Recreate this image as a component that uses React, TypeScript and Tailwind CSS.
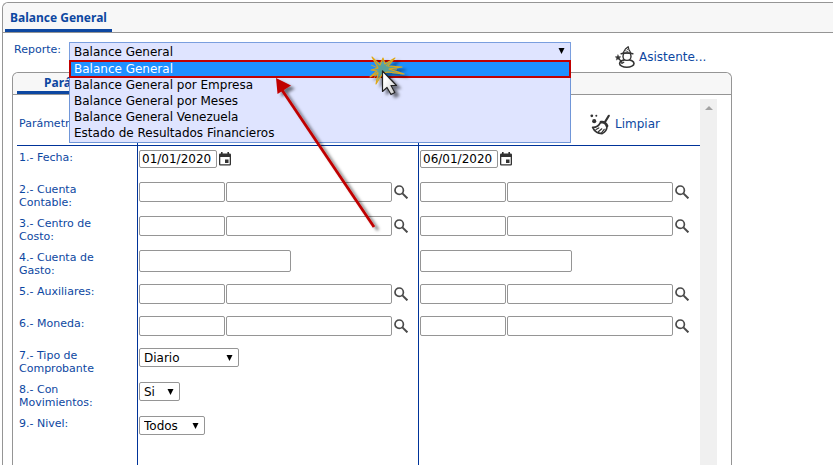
import { useState, type ReactNode } from 'react';
import clsx from 'clsx';

const reports = [
  'Balance General',
  'Balance General por Empresa',
  'Balance General por Meses',
  'Balance General Venezuela',
  'Estado de Resultados Financieros',
];

const fieldClass = 'rounded-xs border border-[#959595] bg-white text-xs text-black';

function CaretIcon() {
  return (
    <svg
      viewBox="0 0 7 7"
      className="pointer-events-none absolute top-1/2 right-1.5 size-[7px] -translate-y-1/2"
      aria-hidden="true"
    >
      <path d="M0.5 0.5h6L3.5 6.5z" fill="#000" />
    </svg>
  );
}

function SearchIcon() {
  return (
    <svg viewBox="0 0 14 14" className="size-3.5" fill="none" stroke="#4a4a4a" aria-hidden="true">
      <circle cx="5.2" cy="5.2" r="4.2" strokeWidth="1.7" />
      <path d="M8.4 8.4l5 5" strokeWidth="2" />
    </svg>
  );
}

function CalendarIcon() {
  return (
    <svg viewBox="0 0 12 14" className="h-3.5 w-3" aria-hidden="true">
      <path
        fill="#333"
        fillRule="evenodd"
        d="M2 0h1.6v1.5h4.8V0H10v1.5h.8Q12 1.5 12 2.7v9.6q0 1.2-1.2 1.2H1.2Q0 13.5 0 12.3V2.7Q0 1.5 1.2 1.5H2zM1.3 5v7.2h9.4V5zM6 7.5h3.5V11H6z"
      />
    </svg>
  );
}

function WizardIcon() {
  return (
    <svg
      viewBox="0 0 20 22"
      className="h-[22px] w-5"
      fill="none"
      stroke="#333"
      strokeWidth="1.4"
      strokeLinejoin="round"
      strokeLinecap="round"
      aria-hidden="true"
    >
      <ellipse cx="11.8" cy="17.4" rx="7.2" ry="3.8" strokeWidth="1.6" />
      <circle cx="12" cy="10.4" r="4" fill="#fff" />
      <path d="M8 7L10.400 3l2.800-2.300.6 2.500L15.800 7z" fill="#fff" strokeWidth="1.200" />
      <path d="M10.500 4.800l2.500.8M11.800 2.800l1.200 1" strokeWidth=".8" />
      <path d="M6.200 7.800c3.400-1.100 8-1.100 11.600 0" strokeWidth="1.500" />
      <path d="M4.200 12.800l2.600 3.600M8.800 16.200l-2 1.200" strokeWidth="1.200" />
      <path
        d="M3 8.800l.8 1.800 2 .2-1.500 1.300.4 2L3 13.100l-1.700 1 .4-2L.2 10.800l2-.2z"
        fill="#333"
        strokeWidth=".4"
      />
    </svg>
  );
}

function BroomIcon() {
  return (
    <svg
      viewBox="0 0 21 21"
      className="size-[21px]"
      fill="none"
      stroke="#333"
      strokeWidth="1.6"
      strokeLinejoin="round"
      strokeLinecap="round"
      aria-hidden="true"
    >
      <path d="M18.800 1.800l-4.100 6.700" strokeWidth="2.2" />
      <path d="M11 8.200c2.600-.5 5.200 1.100 6 3.800" strokeWidth="2.800" />
      <path d="M10.200 9C8.400 12.300 6 13.600 2.600 13.400c1.600 3.700 5.200 6 9.600 6.200 3.200-1.600 4.800-4.300 4.800-7.600" />
      <path d="M6 15.500l2.800-1.600M8.600 17.500l3.200-2.700M11.600 18.900l2.600-3.600" strokeWidth="1.2" />
      <circle cx="1.8" cy="1.8" r="1.4" fill="#333" stroke="none" />
      <circle cx="6.300" cy="1.8" r="1" fill="#333" stroke="none" />
      <circle cx="4.2" cy="7.200" r="2.1" fill="#333" stroke="none" />
    </svg>
  );
}

// arrow and click pointer drawn over the open list
function ClickHint() {
  return (
    <svg
      viewBox="0 0 360 180"
      className="pointer-events-none absolute top-0 left-0 h-[180px] w-[360px] overflow-visible"
      aria-hidden="true"
    >
      <defs>
        <filter id="shadow" x="-20%" y="-20%" width="150%" height="150%">
          <feDropShadow dx="4" dy="3" stdDeviation="1.8" floodColor="#000" floodOpacity=".5" />
        </filter>
        <linearGradient id="pointer" x1="0" y1="0" x2="1" y2="1">
          <stop offset=".3" stopColor="#fff" />
          <stop offset="1" stopColor="#c8c8c8" />
        </linearGradient>
      </defs>
      <g filter="url(#shadow)">
        <path d="M213 30L305 167" stroke="#c00000" strokeWidth="2.8" />
        <path d="M207 18l1.500 16L222 25.500z" fill="#c00000" />
      </g>
      <g filter="url(#shadow)">
        <path
          d="M303-3L311 5L314-2L316 4L326-2L319 6L333 7L320 9L335 14L319 12L314 13L307 24L309 13L301 17L308 11L302 10L309 8z"
          fill="#6fae8c"
          fillOpacity=".7"
          stroke="#e0a818"
          strokeWidth="1.1"
          strokeLinejoin="round"
        />
        <path d="M302 5l7 3M323 1l-6 5M320 9h8M305 18l4-6" stroke="#e0a818" strokeWidth=".8" />
        <path
          d="M313.500 11v20.500l4.500-4 4 7 3.800-2-3.800-7h5.500z"
          fill="url(#pointer)"
          stroke="#222"
          strokeWidth="1.2"
          strokeLinejoin="round"
        />
      </g>
    </svg>
  );
}

type SelectProps = {
  id: string;
  options: string[];
  className: string;
};

function SelectField(props: SelectProps) {
  return (
    <div className={clsx('relative', props.className)}>
      <select id={props.id} className={clsx(fieldClass, 'block h-[19px] w-full appearance-none pl-1')}>
        {props.options.map((option) => (
          <option key={option}>{option}</option>
        ))}
      </select>
      <CaretIcon />
    </div>
  );
}

function DateField({ id, label, initial }: { id: string; label: string; initial: string }) {
  const [value, setValue] = useState(initial);

  return (
    <div className="flex items-center gap-0.5">
      <input
        id={id}
        type="text"
        aria-label={label}
        value={value}
        onChange={(e) => setValue(e.target.value)}
        className={clsx(fieldClass, 'h-[18px] w-[78px] px-0.5')}
      />
      <button type="button" aria-label="Abrir calendario">
        <CalendarIcon />
      </button>
    </div>
  );
}

function LookupField({ id, label }: { id: string; label: string }) {
  return (
    <div className="flex items-center gap-px">
      <input id={id} aria-label={label} type="text" className={clsx(fieldClass, 'h-5 w-[86px] px-0.5')} />
      <input aria-label={`${label} descripción`} type="text" className={clsx(fieldClass, 'h-5 w-[166px] px-0.5')} />
      <button type="button" aria-label="Buscar" className="ml-px">
        <SearchIcon />
      </button>
    </div>
  );
}

function TextField({ id, label }: { id: string; label: string }) {
  return <input id={id} aria-label={label} type="text" className={clsx(fieldClass, 'block h-[22px] w-[152px] px-0.5')} />;
}

type RowProps = {
  id: string;
  label: string;
  from: ReactNode;
  to?: ReactNode;
  tall?: boolean;
};

function ParamRow({ id, label, from, to, tall }: RowProps) {
  return (
    <tr className={clsx('align-top', tall ? 'h-[34px]' : 'h-8')}>
      <th scope="row" className="border-r border-[#003399] pt-[5px] pr-4 pl-0.5 text-left font-normal">
        <label htmlFor={id} className="block text-[11px] leading-[13px]">
          {label}
        </label>
      </th>
      <td className="border-r border-[#003399] pt-1 pl-px">{from}</td>
      <td className="pt-1 pl-px">{to}</td>
    </tr>
  );
}

function ReportPicker() {
  const [report, setReport] = useState(reports[0]);

  return (
    <div className="relative w-[502px]">
      <select
        id="reporte"
        value={report}
        onChange={(e) => setReport(e.target.value)}
        className="block h-[18px] w-full appearance-none border border-b-0 border-[#7a9ede] bg-[#dfe4ff] pl-1 text-xs text-black"
      >
        {reports.map((name) => (
          <option key={name}>{name}</option>
        ))}
      </select>
      <CaretIcon />
      <ul
        role="listbox"
        aria-label="Reporte"
        className="absolute top-full left-0 z-10 w-full border border-[#7096d8] bg-[#dfe4ff] pb-px text-xs leading-4 text-black"
      >
        {reports.map((name) => (
          <li
            key={name}
            role="option"
            aria-selected={name === report}
            onClick={() => setReport(name)}
            className={clsx(
              'cursor-default pl-1',
              name === report && 'bg-[#1e90ff] text-white outline-2 -outline-offset-1 outline-[#c00000]'
            )}
          >
            {name}
          </li>
        ))}
      </ul>
      <div className="absolute top-full left-0 z-20">
        <ClickHint />
      </div>
    </div>
  );
}

export default function App() {
  return (
    <div className="flex min-h-screen flex-col bg-white pt-0.5 pl-0.5 font-['DejaVu_Sans',Verdana,sans-serif] text-xs text-[#0d47a1]">
      <main className="flex flex-1 flex-col rounded-tl-md border-t border-l border-[#959595]">
        <div className="flex h-[30px] rounded-tl-md border-b border-[#959595] bg-[#f7f7f7] pl-0.5">
          <button
            type="button"
            className="border-b-3 border-[#0d47a1] px-[5px] pt-1 font-['Noto_Sans',Verdana,sans-serif] font-bold"
          >
            Balance General
          </button>
        </div>

        <div className="flex h-[39px] items-start pt-[9px] pl-[11px]">
          <label htmlFor="reporte" className="w-[55px] text-[11px] leading-4">
            Reporte:
          </label>
          <ReportPicker />
          <button type="button" className="mt-1 ml-11 flex items-center gap-1">
            <WizardIcon />
            Asistente...
          </button>
        </div>

        <section className="mr-[101px] ml-[9px] flex flex-1 flex-col rounded-t-md border border-b-0 border-[#959595]">
          <div className="flex h-[22px] rounded-t-md border-b border-[#959595] bg-[#f7f7f7] pl-1">
            <button
              type="button"
              className="border-b-3 border-[#0d47a1] px-[27px] pt-0.5 font-['Noto_Sans',Verdana,sans-serif] leading-4 font-bold"
            >
              Parámetros
            </button>
          </div>

          <div className="flex flex-1 pt-1 pr-3.5 pl-1">
            <div className="flex flex-1 flex-col">
              <table className="w-full table-fixed border-separate border-spacing-0">
                <colgroup>
                  <col className="w-[121px]" />
                  <col />
                  <col />
                </colgroup>
                <thead>
                  <tr className="h-[47px]">
                    <th
                      scope="col"
                      className="border-r border-b border-[#003399] pt-1 pl-0.5 text-left text-[11px] font-normal"
                    >
                      Parámetros
                    </th>
                    <td className="border-r border-b border-[#003399]" />
                    <td className="border-b border-[#003399] pt-1 pr-10">
                      <button type="button" className="ml-auto flex items-center gap-1">
                        <BroomIcon />
                        Limpiar
                      </button>
                    </td>
                  </tr>
                </thead>
                <tbody>
                  <ParamRow
                    id="fecha"
                    label="1.- Fecha:"
                    from={<DateField id="fecha" label="Fecha desde" initial="01/01/2020" />}
                    to={<DateField id="fecha-hasta" label="Fecha hasta" initial="06/01/2020" />}
                  />
                  <ParamRow
                    id="cuenta"
                    label="2.- Cuenta Contable:"
                    tall
                    from={<LookupField id="cuenta" label="Cuenta contable desde" />}
                    to={<LookupField id="cuenta-hasta" label="Cuenta contable hasta" />}
                  />
                  <ParamRow
                    id="centro"
                    label="3.- Centro de Costo:"
                    tall
                    from={<LookupField id="centro" label="Centro de costo desde" />}
                    to={<LookupField id="centro-hasta" label="Centro de costo hasta" />}
                  />
                  <ParamRow
                    id="gasto"
                    label="4.- Cuenta de Gasto:"
                    tall
                    from={<TextField id="gasto" label="Cuenta de gasto desde" />}
                    to={<TextField id="gasto-hasta" label="Cuenta de gasto hasta" />}
                  />
                  <ParamRow
                    id="auxiliares"
                    label="5.- Auxiliares:"
                    from={<LookupField id="auxiliares" label="Auxiliares desde" />}
                    to={<LookupField id="auxiliares-hasta" label="Auxiliares hasta" />}
                  />
                  <ParamRow
                    id="moneda"
                    label="6.- Moneda:"
                    from={<LookupField id="moneda" label="Moneda desde" />}
                    to={<LookupField id="moneda-hasta" label="Moneda hasta" />}
                  />
                  <ParamRow
                    id="tipo"
                    label="7.- Tipo de Comprobante"
                    tall
                    from={<SelectField id="tipo" options={['Diario']} className="w-[100px]" />}
                  />
                  <ParamRow
                    id="movimientos"
                    label="8.- Con Movimientos:"
                    tall
                    from={<SelectField id="movimientos" options={['Si', 'No']} className="w-[41px]" />}
                  />
                  <ParamRow
                    id="nivel"
                    label="9.- Nivel:"
                    from={<SelectField id="nivel" options={['Todos']} className="w-[66px]" />}
                  />
                </tbody>
              </table>
              {/* keeps the column rules running to the bottom */}
              <div className="grid flex-1 grid-cols-[121px_1fr_1fr]">
                <div className="border-r border-[#003399]" />
                <div className="border-r border-[#003399]" />
              </div>
            </div>

            <div className="flex w-[17px] justify-center bg-[#f0f0f0] pt-[7px]">
              <svg viewBox="0 0 8 4" className="h-1 w-2" aria-hidden="true">
                <path d="M4 0l4 4H0z" fill="#a3a3a3" />
              </svg>
            </div>
          </div>
        </section>
      </main>
    </div>
  );
}
